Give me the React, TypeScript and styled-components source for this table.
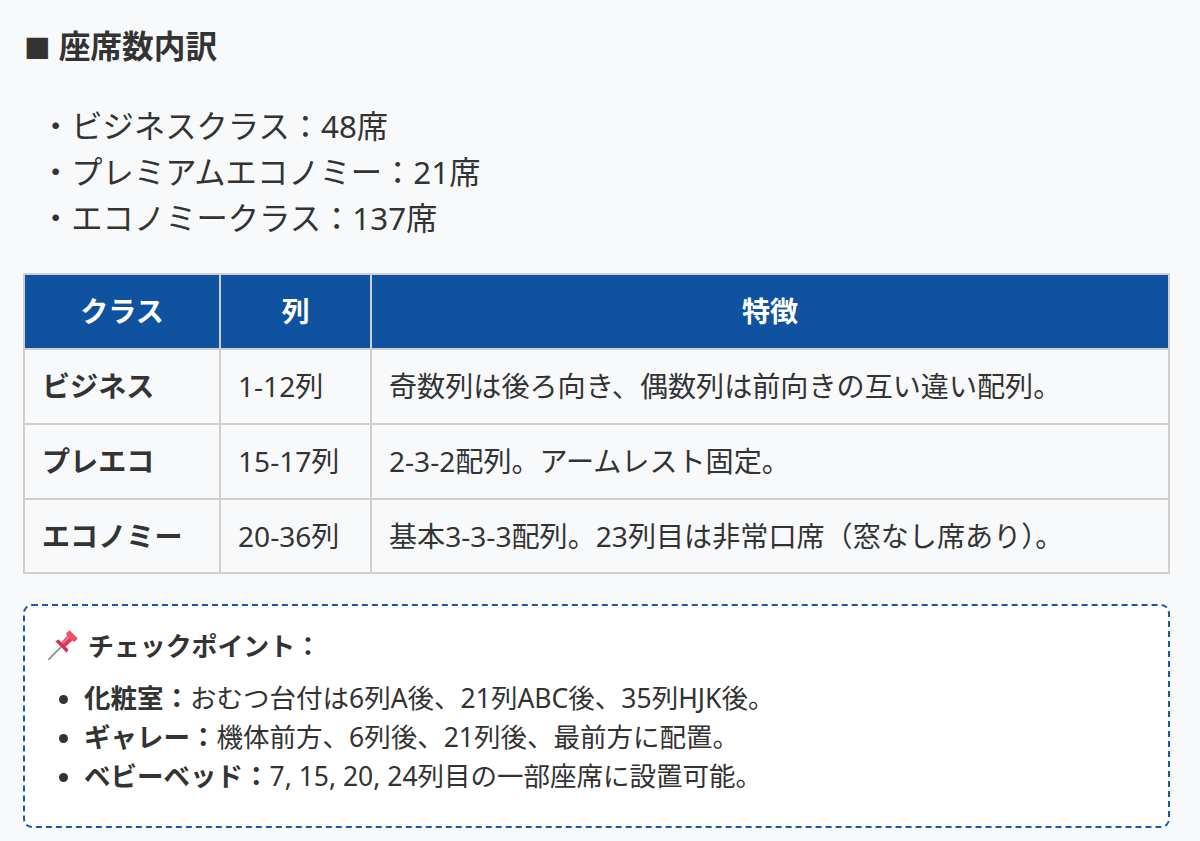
import React from "react";
import styled, { createGlobalStyle } from "styled-components";

const GlobalStyle = createGlobalStyle`
  html, body {
    margin: 0;
    padding: 0;
    background: #f8f9fb;
  }
  body {
    font-family: "Noto Sans", "Noto Sans CJK JP", sans-serif;
    color: #333;
  }
`;

const Page = styled.div`
  padding: 21px 30px 20px 23px;
`;

const Heading = styled.h3`
  margin: 0 0 31px 0;
  font-size: 31.7px;
  line-height: 1.6;
  font-weight: 700;
  color: #333;
`;

const Square = styled.span`
  font-size: 0.84em;
  margin-right: 8px;
  margin-left: 1px;
`;

const SeatList = styled.ul`
  list-style: none;
  margin: 0 0 32px 0;
  padding-left: 17px;
`;

const SeatItem = styled.li`
  font-size: 31.3px;
  line-height: 46px;
  color: #333;
`;

const Table = styled.table`
  width: 100%;
  border-collapse: collapse;
  table-layout: fixed;
  font-size: 28.1px;
  line-height: 1.6;
`;

const Th = styled.th<{ $w?: number }>`
  box-sizing: border-box;
  width: ${(p) => (p.$w ? `${p.$w}px` : "auto")};
  background: #0f52a0;
  color: #fff;
  font-weight: 700;
  text-align: center;
  border: 2px solid #cfcfcf;
  padding: 14px 18px;
`;

const Td = styled.td<{ $bold?: boolean }>`
  border: 2px solid #cfcfcf;
  padding: 14px 17px;
  font-weight: ${(p) => (p.$bold ? 700 : 400)};
  color: #333;
  text-align: left;
  white-space: nowrap;
`;

const NoteBox = styled.div`
  margin-top: 30px;
  border: 2px dashed #1659a8;
  border-radius: 9px;
  background: #fff;
  padding: 20px 22px 30px 22px;
`;

const NoteTitle = styled.div`
  display: flex;
  align-items: center;
  gap: 13px;
  font-size: 25.9px;
  line-height: 1.6;
  font-weight: 700;
  margin-bottom: 11px;
`;

const NoteList = styled.ul`
  margin: 0;
  padding-left: 37px;
  list-style: disc;
`;

const NoteItem = styled.li`
  font-size: 26.5px;
  line-height: 38.9px;
  color: #333;
`;

const Strong = styled.strong`
  font-weight: 700;
`;

const Pin = () => (
  <svg width="28" height="28" viewBox="0 0 28 28" overflow="visible" aria-hidden>
    <g transform="rotate(45 14 14)">
      <rect x="13.1" y="14" width="1.8" height="18" rx="0.9" fill="#8e8e9a" />
      <path d="M6 14 L22 14 L21 10.5 L7 10.5 Z" fill="#d42e50" />
      <path d="M10.5 1 L17.5 1 L17 11 L11 11 Z" fill="#e23a5c" />
      <rect x="8" y="-4" width="12" height="5.5" rx="1.2" fill="#f0506e" />
      <rect x="11.5" y="1.5" width="2" height="8.5" fill="#f57891" />
    </g>
  </svg>
);

const rows = [
  { cls: "ビジネス", col: "1-12列", feat: "奇数列は後ろ向き、偶数列は前向きの互い違い配列。" },
  { cls: "プレエコ", col: "15-17列", feat: "2-3-2配列。アームレスト固定。" },
  { cls: "エコノミー", col: "20-36列", feat: "基本3-3-3配列。23列目は非常口席（窓なし席あり）。" },
];

export default function App() {
  return (
    <>
      <GlobalStyle />
      <Page>
        <Heading>
          <Square>■</Square>座席数内訳
        </Heading>
        <SeatList>
          <SeatItem>・ビジネスクラス：48席</SeatItem>
          <SeatItem>・プレミアムエコノミー：21席</SeatItem>
          <SeatItem>・エコノミークラス：137席</SeatItem>
        </SeatList>
        <Table>
          <thead>
            <tr>
              <Th $w={196}>クラス</Th>
              <Th $w={151}>列</Th>
              <Th>特徴</Th>
            </tr>
          </thead>
          <tbody>
            {rows.map((r) => (
              <tr key={r.cls}>
                <Td $bold>{r.cls}</Td>
                <Td>{r.col}</Td>
                <Td>{r.feat}</Td>
              </tr>
            ))}
          </tbody>
        </Table>
        <NoteBox>
          <NoteTitle>
            <Pin />
            <span>チェックポイント：</span>
          </NoteTitle>
          <NoteList>
            <NoteItem>
              <Strong>化粧室：</Strong>おむつ台付は6列A後、21列ABC後、35列HJK後。
            </NoteItem>
            <NoteItem>
              <Strong>ギャレー：</Strong>機体前方、6列後、21列後、最前方に配置。
            </NoteItem>
            <NoteItem>
              <Strong>ベビーベッド：</Strong>7, 15, 20, 24列目の一部座席に設置可能。
            </NoteItem>
          </NoteList>
        </NoteBox>
      </Page>
    </>
  );
}
